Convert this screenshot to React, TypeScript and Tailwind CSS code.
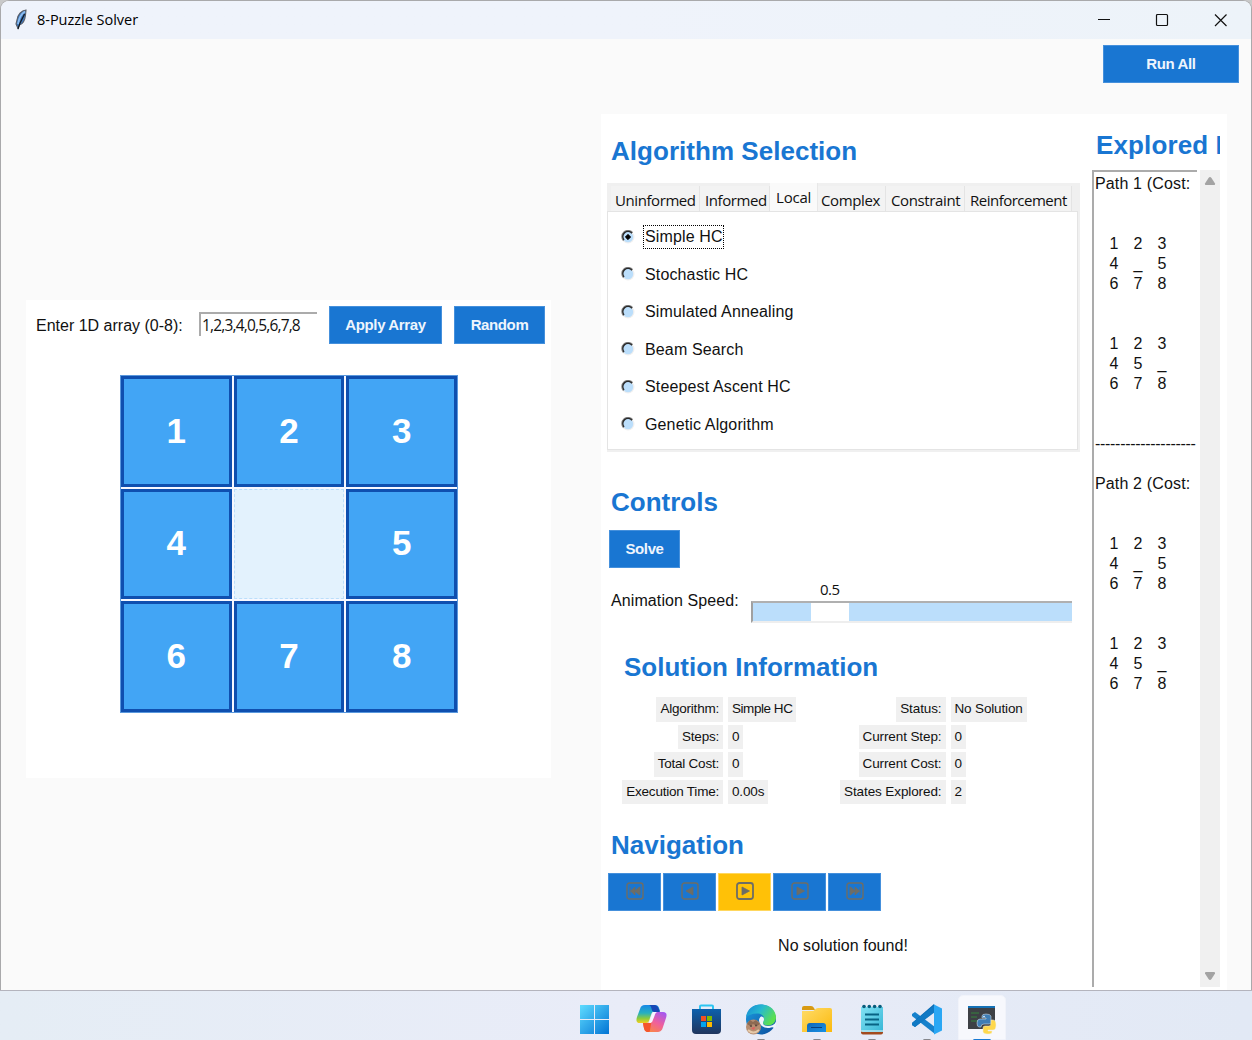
import React from "react";

const Heading = ({ children, className = "" }: { children: React.ReactNode; className?: string }) => (
  <h2 className={"flex h-[30px] items-center whitespace-nowrap text-[26px] font-bold leading-[30px] text-[#1976d2] " + className}>{children}</h2>
);

const Button = ({ children, className = "" }: { children: React.ReactNode; className?: string }) => (
  <button
    className={"flex h-[38px] shrink-0 items-center justify-center whitespace-nowrap border border-[#4590dc] bg-[#1976d2] text-[15px] font-bold tracking-[-0.38px] text-[#eef5fd] " + className}
  >
    {children}
  </button>
);

const tiles = [1, 2, 3, 4, 0, 5, 6, 7, 8];

const tabs = [
  { name: "Uninformed", box: "w-[89px] pl-[4px]", text: "tracking-[-0.42px]" },
  { name: "Informed", box: "w-[70px] pl-[5px]", text: "tracking-[-0.4px]" },
  { name: "Local", box: "w-[48px] pl-[6px]", text: "tracking-[-0.2px]" },
  { name: "Complex", box: "w-[68px] pl-[3px]", text: "tracking-[-0.38px]" },
  { name: "Constraint", box: "w-[79px] pl-[5px]", text: "tracking-[-0.38px]" },
  { name: "Reinforcement", box: "w-[107px] pl-[5px]", text: "tracking-[-0.5px]" },
];

const algorithms = ["Simple HC", "Stochastic HC", "Simulated Annealing", "Beam Search", "Steepest Ascent HC", "Genetic Algorithm"];

const info = [
  ["Algorithm:", "Simple HC", "Status:", "No Solution"],
  ["Steps:", "0", "Current Step:", "0"],
  ["Total Cost:", "0", "Current Cost:", "0"],
  ["Execution Time:", "0.00s", "States Explored:", "2"],
];

const Radio = ({ on }: { on: boolean }) => (
  <svg width="14" height="14" viewBox="0 0 14 14" className="shrink-0">
    <circle cx="7" cy="7" r="6.5" fill="#efefef" />
    <circle cx="7" cy="7" r="5.2" fill="#bbdefb" />
    <path d="M2.4 10.7A5.8 5.8 0 0 1 11.7 2.5" fill="none" stroke="#858585" strokeWidth="1.1" />
    <path d="M3 10A5 5 0 0 1 11 3.2" fill="none" stroke="#292929" strokeWidth="1.4" />
    {on && <path d="M7 4.3 9.7 7 7 9.7 4.3 7Z" fill="#000" stroke="#000" strokeWidth=".8" strokeLinejoin="round" />}
  </svg>
);

const navIcons = [
  "M4 5v8M4.500 9l4.500-4v8zM9 9l4.500-4v8zM14 5v8",
  "M5 9l7-4v8z",
  "M6 5l7.500 4-7.500 4z",
  "M6 5l7.500 4-7.500 4z",
  "M4 5v8M4.500 5l4.500 4-4.500 4zM9 5l4.500 4-4.500 4zM14 5v8",
];

const Rows = ({ rows }: { rows: string[][] }) => (
  <div className="pl-[5px]">
    {rows.map((r, i) => (
      <div key={i} className="grid h-5 grid-cols-[24px_24px_24px] text-center">
        {r.map((c, j) => (
          <span key={j} className="w-[28px]">{c}</span>
        ))}
      </div>
    ))}
  </div>
);

const stateA = [["1", "2", "3"], ["4", "_", "5"], ["6", "7", "8"]];
const stateB = [["1", "2", "3"], ["4", "5", "_"], ["6", "7", "8"]];

const PathBlock = ({ n }: { n: number }) => (
  <div>
    <div className="h-[60px] whitespace-nowrap tracking-[0.15px]">Path {n} (Cost:</div>
    <Rows rows={stateA} />
    <div className="h-10" />
    <Rows rows={stateB} />
  </div>
);

const Feather = () => (
  <svg width="14" height="22" viewBox="0 0 14 22">
    <path d="M12 1C7.500 1.500 3.500 5.500 3 11L2 15l2 4.500L5.500 16c3.500-1 5.500-5 6-10z" fill="#3f78bd" stroke="#5a5e66" strokeWidth="1.100" />
    <path d="M11 2.500C7 5 5 9 4 15" fill="none" stroke="#8dbdf0" strokeWidth="1.800" />
    <path d="M10.500 5C9 9 6 12 4 20" fill="none" stroke="#111820" strokeWidth="1.200" />
  </svg>
);

const Defs = () => (
  <defs>
    <linearGradient id="win" gradientUnits="userSpaceOnUse" x1="1" y1="1" x2="30" y2="30"><stop stopColor="#5fdcff" /><stop offset="1" stopColor="#0274d4" /></linearGradient>
    <linearGradient id="cpA" x1="0" y1="0" x2="0" y2="1"><stop stopColor="#1688e8" /><stop offset=".45" stopColor="#27b0c0" /><stop offset=".75" stopColor="#8ecb3c" /><stop offset="1" stopColor="#f2cf20" /></linearGradient>
    <linearGradient id="cpB" x1=".8" y1="0" x2=".2" y2="1"><stop stopColor="#a558ef" /><stop offset=".5" stopColor="#f0609b" /><stop offset="1" stopColor="#fb8a3f" /></linearGradient>
    <linearGradient id="store" x1="0" y1="0" x2="0" y2="1"><stop stopColor="#0d61ad" /><stop offset="1" stopColor="#20355d" /></linearGradient>
    <linearGradient id="edgeT" x1="0" y1="0" x2="1" y2=".5"><stop stopColor="#1687d8" /><stop offset=".5" stopColor="#27b9cf" /><stop offset="1" stopColor="#5be04f" /></linearGradient>
    <linearGradient id="edgeB" x1="0" y1="0" x2="1" y2="1"><stop stopColor="#1b9de2" /><stop offset="1" stopColor="#0c4c9c" /></linearGradient>
    <linearGradient id="fold" x1="0" y1="0" x2="1" y2="1"><stop stopColor="#ffdc69" /><stop offset="1" stopColor="#fbb90d" /></linearGradient>
    <linearGradient id="foldB" x1="0" y1="0" x2="1" y2="1"><stop stopColor="#0f66b8" /><stop offset="1" stopColor="#1991e5" /></linearGradient>
    <linearGradient id="note" x1="0" y1="0" x2="1" y2="1"><stop stopColor="#83e2f4" /><stop offset="1" stopColor="#37b6d6" /></linearGradient>
  </defs>
);

const icons = [
  <g key="w" fill="url(#win)"><rect x="1" y="1" width="14" height="14" /><rect x="16" y="1" width="14" height="14" /><rect x="1" y="16" width="14" height="14" /><rect x="16" y="16" width="14" height="14" /></g>,
  <g key="c">
    <path d="M9 1h10c3 0 4 2 5 6h-4c-3 0-4 1-5 4l-2 6c-1 2-2 2-4 2H4c-4 0-4-3-3-6L4 5c1-3 2-4 5-4z" fill="url(#cpA)" />
    <path d="M17 1c4 0 5 1 7 7h-5c-3 0-3-2-4-5-.4-1-1-2-2-2z" fill="#1747b6" />
    <path d="M23 8h4c4 0 4 3 3 6l-3 9c-1 4-3 5-6 5H12c-3 0-4-2-5-9h3c4 0 5-1 6-4l2-5c1-2 2-2 5-2z" fill="url(#cpB)" />
    <path d="M7 19h4c3 0 4-1 5-4l-2 11c0 1 0 2-2 2-3 0-4-2-5-9z" fill="#f4562d" />
    <path d="M17.500 8h4c-1.500 0-2.500 2-3 4l-2 5c-.5 1.500-1.500 2-3 2h-2c1.500 0 2-1 2.500-3l2-5c.5-2 .5-3 1.500-3z" fill="#f7f5ff" />
  </g>,
  <g key="s"><path d="M9 6V2.500Q9 1.500 10 1.500H21Q22 1.500 22 2.500V6" fill="none" stroke="#2cc5f2" strokeWidth="2" /><path d="M1 5h29v21q0 4-4 4H5q-4 0-4-4z" fill="url(#store)" /><path d="M10 12h5v5h-5z" fill="#f25022" /><path d="M16 12h5v5h-5z" fill="#7fba00" /><path d="M10 18h5v5h-5z" fill="#00a4ef" /><path d="M16 18h5v5h-5z" fill="#ffb900" /></g>,
  <g key="e"><circle cx="16" cy="15.500" r="15" fill="url(#edgeB)" /><path d="M1 13C2 5 8 .5 16 .5c9 0 15 6 15 13 0 5-4 8-8 8-3 0-5-1-5-3 0-1 1-1 1-4 0-3-3-5-7-5-5 0-9 2-11 3.500z" fill="url(#edgeT)" /><path d="M16 12.500c2 0 3 1 3 3 0 1.500-1 2-1 3.500 0 2 2 3 5 3 3 0 6-1 8-4l1 5-3 1q-1-1-3-.5c-6 2-12-2-12-7 0-2 .8-3 2-4z" fill="#eef3fb" /><circle cx="8.500" cy="23" r="7.500" fill="#b68d70" /><path d="M2 20l3-4 3 2 3-2 4 4-3 2-4-2-3 2z" fill="#8d6a52" /><circle cx="6" cy="22" r="1" fill="#5b453b" /><circle cx="11" cy="21.500" r="1" fill="#5b453b" /><path d="M6 24l4-1-1 3z" fill="#e55b5c" /><path d="M3 26q5 5 11 0" fill="none" stroke="#e5c9a9" strokeWidth="2" /></g>,
  <g key="f"><path d="M1 4q0-2 2-2h7q2 0 3 2l1 2H1z" fill="#d89a12" /><path d="M1 7h10q2 0 3-1.500T17 4h12q2 0 2 2v22H1z" fill="url(#fold)" /><path d="M6 28v-6q0-3 3-3h13q3 0 3 3v6z" fill="url(#foldB)" /><path d="M10 23.500h11" stroke="#073f7d" strokeWidth="1" /></g>,
  <g key="n"><path d="M5 26h22v2.500q0 2-2 2H7q-2 0-2-2z" fill="#a34a1e" /><path d="M5 3h22v25H7q-2 0-2-2z" fill="url(#note)" /><path d="M5 27h22" stroke="#f7f7f7" strokeWidth="1" /><path d="M9 10.500h14M9 15.500h14M9 20.500h14" stroke="#086384" strokeWidth="2" /><g fill="#075c7c"><circle cx="8" cy="2.500" r="1.800" /><circle cx="13.300" cy="2.500" r="1.800" /><circle cx="18.600" cy="2.500" r="1.800" /><circle cx="24" cy="2.500" r="1.800" /></g></g>,
  <g key="v"><path d="M1 10l3-2 20 15v7L1 12z" fill="#1681cc" /><path d="M1 21v-2L23 0v8L4 23z" fill="#0869b1" /><path d="M1 21l3 2L24 8V.5L1 19z" fill="#1079c4" /><path d="M23 .5l8 4v22l-8 4z" fill="#2aa7f4" /></g>,
  <g key="p"><path d="M1 2h27v23H1z" fill="#3d4045" /><path d="M1 2h27v2H1z" fill="#1471b6" /><path d="M4 9h8M4 13h6M4 17h8" stroke="#35833d" strokeWidth="1" /><path d="M15 12q0-2 4-2t5 2v6q0 2-2 2h-5q-3 0-3 3h-2q-2 0-2-4t3-4h6v-1h-4z" fill="#3f7db5" stroke="#e6edf3" strokeWidth=".5" /><path d="M24 16h2q3 0 3 5t-3 5h-5v1h4v1q0 2-4 2t-5-2v-4q0-2 2-2h4q2 0 2-3z" fill="#ffd84c" stroke="#f3efd8" strokeWidth=".5" /><circle cx="17" cy="12.500" r=".8" fill="#fff" /></g>,
];

const iconBox = ["ml-[-1px]", "ml-[26px]", "ml-[24px]", "ml-[23px]", "ml-[25px]", "ml-[24px]", "ml-[24px]", "ml-[16px]"];

const labelTracking = ["tracking-[-0.22px]", "tracking-0", "tracking-[-0.1px]"];

export default function App() {
  return (
    <div className="flex h-[1040px] w-[1252px] flex-col overflow-hidden bg-[#c9c9c9] font-['Liberation_Sans',sans-serif] text-[#111]">
      <div className="flex h-[990px] shrink-0 flex-col overflow-hidden rounded-t-[9px] border border-b-0 border-[#a9a9ab] bg-[#fafafa]">
        <header className="flex h-[38px] shrink-0 items-center bg-gradient-to-r from-[#eff3fb] via-[#eff3fb] to-[#edf3f9] pl-[13px]">
          <Feather />
          <span className="ml-[9px] whitespace-nowrap font-['Open_Sans',sans-serif] text-[14.5px] leading-[20px] tracking-[-0.02px] text-black">8-Puzzle Solver</span>
          <svg className="ml-auto mr-[22px]" width="132" height="14" viewBox="0 0 132 14" fill="none" stroke="#111" strokeWidth="1.200">
            <path d="M1 6.500h12" />
            <rect x="59.500" y="1.500" width="11" height="11" rx="1" />
            <path d="M118 1.500l11.500 11.500M129.500 1.500L118 13" />
          </svg>
        </header>
        <div className="flex h-[75px] shrink-0 justify-end pr-[12px] pt-[6px]">
          <Button className="w-[136px]">Run All</Button>
        </div>
        <main className="flex flex-1 items-start">
          <section className="ml-[25px] mt-[186px] h-[478px] w-[525px] shrink-0 bg-white">
            <div className="flex pl-[10px] pt-[6px]">
              <label className="mt-[10px] w-[163px] whitespace-nowrap text-[16px] leading-5">Enter 1D array (0-8):</label>
              <div className="mt-[6px] h-[24px] w-[118px] whitespace-nowrap border-l-2 border-t-2 border-[#ababab] pl-px font-['Open_Sans',sans-serif] text-[15.5px] leading-[23px] tracking-[-0.82px]">1,2,3,4,0,5,6,7,8</div>
              <Button className="ml-[12px] w-[113px]">Apply Array</Button>
              <Button className="ml-[12px] w-[91px]">Random</Button>
            </div>
            <div className="ml-[94px] mt-[31px] grid h-[338px] w-[338px] grid-cols-3 grid-rows-3 gap-[2px] border border-[#5a98dd] bg-[#f7f8ff]">
              {tiles.map((t, i) =>
                t ? (
                  <div key={i} className="flex items-center justify-center border-[3px] border-[#0f4faf] bg-[#42a5f5] pb-[2px] text-[35px] font-bold leading-none text-white">{t}</div>
                ) : (
                  <div key={i} className="border-[1.5px] border-dashed border-[#bbdefb] bg-[#e3f2fd]" />
                )
              )}
            </div>
          </section>

          <section className="ml-[50px] flex h-[876px] w-[626px] shrink-0 bg-white">
            <div className="w-[491px] shrink-0">
              <Heading className="ml-[10px] mt-[22px] tracking-[0.03px]">Algorithm Selection</Heading>
              <div className="ml-[6px] mt-[17px] flex h-[269px] w-[473px] flex-col bg-[#f0f0f0] pb-[2px] pr-[2px]">
                <div className="flex h-[28px] shrink-0 items-end pl-[4px] font-['Open_Sans',sans-serif] text-[15px]">
                  {tabs.map((t) => (
                    <div
                      key={t.name}
                      className={
                        "flex shrink-0 items-center whitespace-nowrap border-r " +
                        t.box + " " + t.text + " " +
                        (t.name === "Local" ? "h-[28px] border-[#e8e8e8] bg-[#fafafa]" : "h-[25px] border-[#e4e4e4] bg-[#f3f3f3] pt-[3px]")
                      }
                    >
                      {t.name}
                    </div>
                  ))}
                </div>
                <div className="flex-1 border border-[#e4e4e4] bg-white pl-[13px] pt-[7px]">
                  {algorithms.map((a, i) => (
                    <div key={a} className="flex h-[37.5px] items-start">
                      <div className="mt-[10.5px]"><Radio on={i === 0} /></div>
                      <span
                        className={
                          "ml-[8px] mt-[6.4px] h-[24px] whitespace-nowrap border pl-[1px] text-[16px] leading-[22px] tracking-[0.14px] " +
                          (i === 0 ? "border-dotted border-black" : "border-transparent")
                        }
                      >
                        {a}
                      </span>
                    </div>
                  ))}
                </div>
              </div>
              <Heading className="ml-[10px] mt-[35px]">Controls</Heading>
              <Button className="ml-[8px] mt-[13px] w-[71px]">Solve</Button>
              <div className="ml-[10px] mt-[13px] flex h-[42px]">
                <span className="mt-[10px] w-[140px] whitespace-nowrap text-[16px] leading-5 tracking-[0.1px]">Animation Speed:</span>
                <div className="w-[321px]">
                  <div className="h-[20px] pl-[69px] font-['Open_Sans',sans-serif] text-[15px] leading-[17px] tracking-[-0.5px]">0.5</div>
                  <div className="flex h-[22px] border-b-2 border-l-2 border-t-2 border-b-[#eeeeee] border-l-[#a0a0a0] border-t-[#b0b0b0] bg-[#bbdefb] pl-[58px]">
                    <div className="w-[38px] bg-white" />
                  </div>
                </div>
              </div>
              <Heading className="ml-[23px] mt-[29px]">Solution Information</Heading>
              <div className="ml-[20px] mt-[15px] text-[13.5px]">
                {info.map((r) => (
                  <div key={r[0]} className="mb-[3px] flex h-[24.5px] items-stretch whitespace-nowrap">
                    {[0, 2].map((k) => (
                      <React.Fragment key={k}>
                        <div className={"flex justify-end " + (k ? "w-[118px]" : "w-[102px]")}>
                          <span className={"flex items-center bg-[#f0f0f0] px-[4px] " + labelTracking[k]}>{r[k]}</span>
                        </div>
                        <div className={"ml-[5px] flex " + (k ? "w-[90px]" : "w-[99.5px]")}>
                          <span className={"flex items-center bg-[#f0f0f0] px-[4px] " + (r[k + 1] === "Simple HC" ? "tracking-[-0.45px]" : "tracking-[-0.15px]")}>{r[k + 1]}</span>
                        </div>
                      </React.Fragment>
                    ))}
                  </div>
                ))}
              </div>
              <Heading className="ml-[10px] mt-[26px]">Navigation</Heading>
              <div className="ml-[7px] mt-[13px] flex gap-[2px]">
                {navIcons.map((d, i) => (
                  <button
                    key={i}
                    className={"flex h-[38px] w-[53px] items-center justify-center border pb-[2px] " + (i === 2 ? "border-[#ffd75e] bg-[#ffc107]" : "border-[#4590dc] bg-[#1976d2]")}
                  >
                    <svg width="18" height="18" viewBox="0 0 18 18" className="text-[#6d6d66]">
                      <rect x="1" y="1" width="16" height="16" rx="2.500" fill="none" stroke="currentColor" strokeWidth={i === 2 ? 1.8 : 1.4} />
                      <path d={d} fill="currentColor" stroke="currentColor" strokeWidth=".8" />
                    </svg>
                  </button>
                ))}
              </div>
              <p className="mt-[25px] w-[484px] text-center text-[16px] leading-5 tracking-[0.05px]">No solution found!</p>
            </div>

            <div className="w-[128px] shrink-0 overflow-hidden">
              <Heading className="ml-[4px] mt-[16px] overflow-visible tracking-[0.12px]">Explored Paths</Heading>
              <div className="mt-[10px] flex h-[817px] justify-between">
                <div className="w-[105px] overflow-hidden border-l-2 border-t-2 border-[#ababab] pl-px pt-[2px] text-[16px] leading-5">
                  <PathBlock n={1} />
                  <div className="h-10" />
                  <div className="h-10 w-[101px] overflow-hidden whitespace-nowrap tracking-[-0.3px]">--------------------</div>
                  <PathBlock n={2} />
                </div>
                <div className="flex w-[20px] flex-col items-center justify-between bg-[#f0f0f0] py-[6px]">
                  <svg width="12" height="10" viewBox="0 0 12 10"><path d="M4.500 2Q6 0 7.500 2L11 7.500Q11.500 9 10 9H2Q.5 9 1 7.500z" fill="#a3a3a3" /></svg>
                  <svg width="12" height="10" viewBox="0 0 12 10"><path d="M4.500 8Q6 10 7.500 8L11 2.500Q11.500 1 10 1H2Q.5 1 1 2.500z" fill="#a3a3a3" /></svg>
                </div>
              </div>
            </div>
          </section>
        </main>
      </div>

      <footer className="flex h-[50px] shrink-0 items-start border-t border-[#b4b4bd] bg-gradient-to-r from-[#e5edf5] via-[#e9ecf8] to-[#e2e9f5] pl-[580px]">
        <svg width="0" height="0" className="absolute"><Defs /></svg>
        {icons.map((icon, i) => (
          <div
            key={i}
            className={
              "flex shrink-0 flex-col items-center " + iconBox[i] + " " +
              (i === 7 ? "mt-[4px] h-[45px] w-[48px] rounded-t-[5px] border border-[#f1f3fa] bg-[#f7f8fd] pt-[8px]" : "h-[49px] w-[31px] pt-[13px]")
            }
          >
            <svg width="31" height="31" viewBox="0 0 31 31" className="shrink-0">{icon}</svg>
            {i > 2 && <div className={"h-[3px] shrink-0 rounded-full " + (i === 7 ? "mt-[4px] w-[18px] bg-[#1879d3]" : "mt-[4px] w-[8px] bg-[#85868c]")} />}
          </div>
        ))}
      </footer>
    </div>
  );
}
